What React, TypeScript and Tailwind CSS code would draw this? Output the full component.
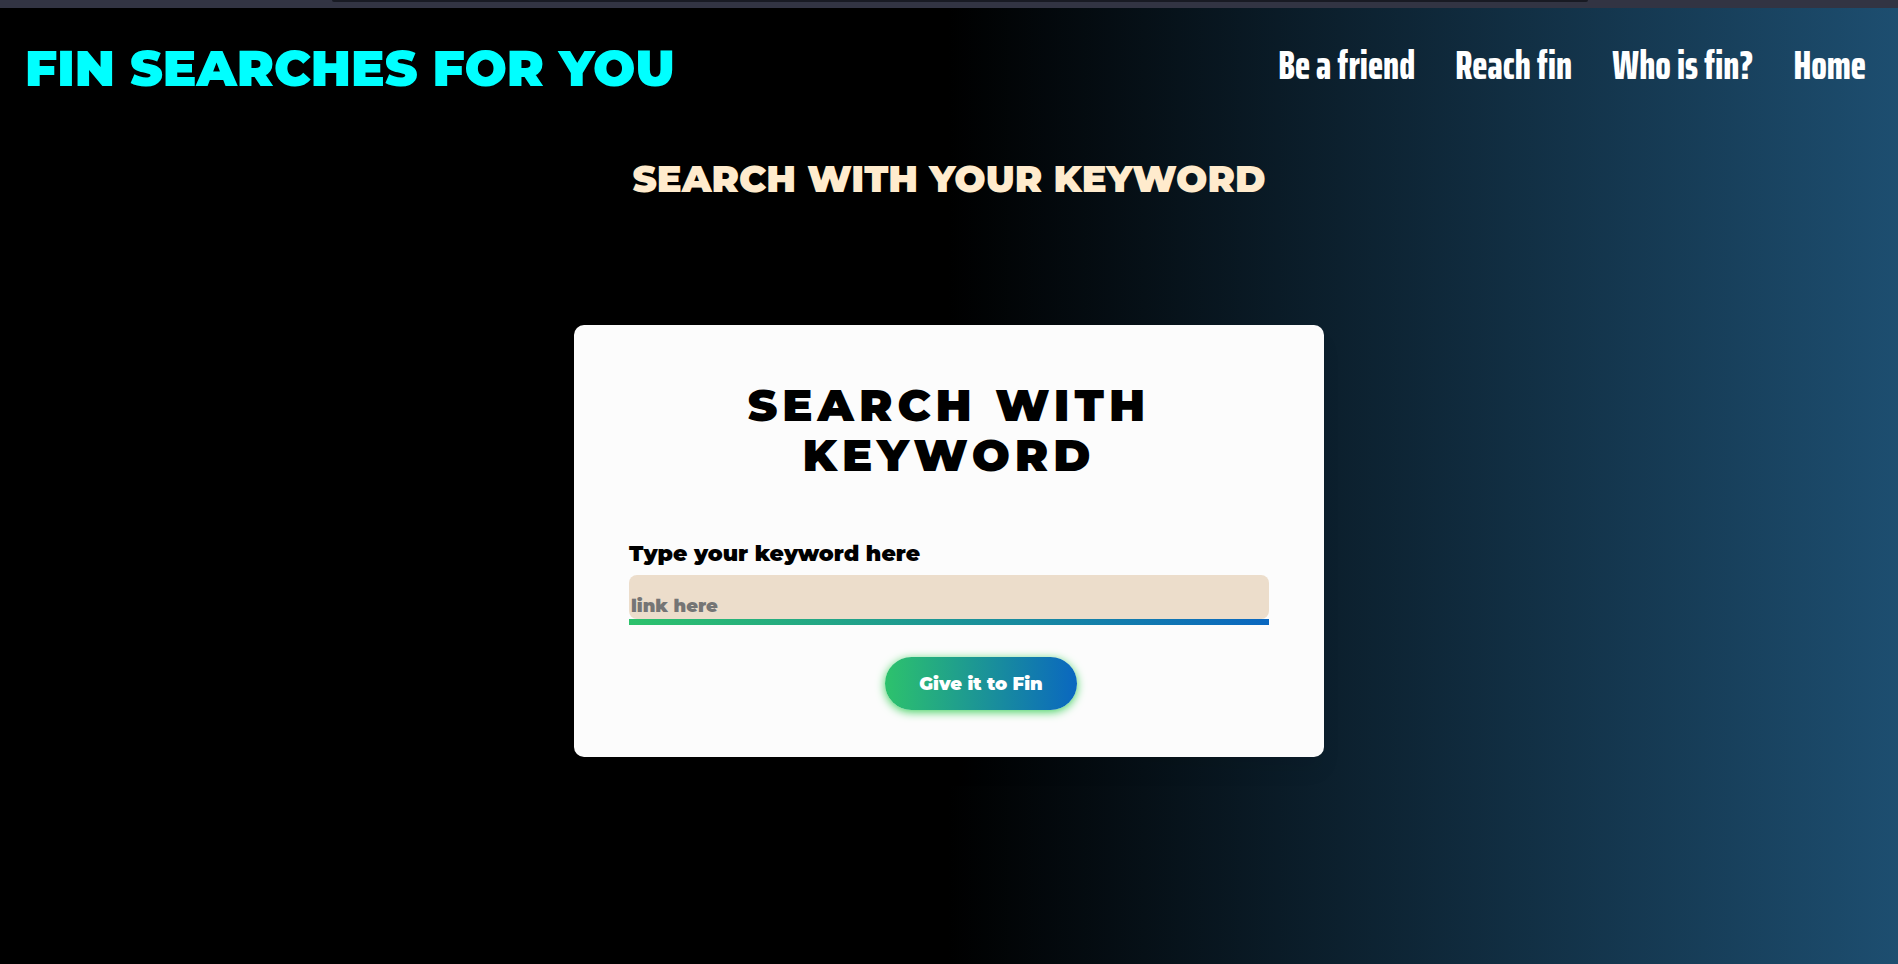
const links = ["Be a friend", "Reach fin", "Who is fin?", "Home"];

export default function App() {
  return (
    <div className="flex min-h-screen flex-col bg-linear-to-r/srgb from-black from-50% to-[#1d4e70] font-['Montserrat',Inter,sans-serif] font-black">
      <div className="h-2 bg-[#323443] px-[332px]">
        <div className="mr-[-22px] h-0.5 rounded-b bg-[#181a23]" />
      </div>

      <header className="flex items-start justify-between pt-8 pr-8 pl-[25px]">
        <h1 className="text-[50px] leading-[58px] text-[#00ffff]">FIN SEARCHES FOR YOU</h1>
        <nav className="flex gap-10 font-['Agency_FB','Saira_ExtraCondensed','Liberation_Sans_Narrow',Roboto,sans-serif] text-[41px] leading-[50px] font-extrabold text-white">
          {links.map((label) => (
            <a key={label} href="#">
              {label}
            </a>
          ))}
        </nav>
      </header>

      <main className="flex flex-col items-center">
        <h2 className="mt-[53px] text-[37px] leading-14 text-[#ffebcd]">SEARCH WITH YOUR KEYWORD</h2>

        <form
          className="mt-[118px] w-full max-w-[750px] rounded-[10px] bg-[#fcfcfc] px-[55px] pt-[55px] pb-[47px] shadow-[0_15px_20px_rgba(0,0,0,0.05)]"
          onSubmit={(event) => event.preventDefault()}
        >
          <h3 className="text-center text-[45px] leading-[50px] tracking-[5px] text-black">
            SEARCH WITH
            <br />
            KEYWORD
          </h3>
          <label htmlFor="keyword" className="mt-[58px] block text-[22px] leading-8 text-black">
            Type your keyword here
          </label>
          <input
            id="keyword"
            type="text"
            placeholder="link here"
            className="mt-[5px] block h-11 w-full rounded-lg bg-[#ecddcb] px-0.5 pt-[18px] text-lg leading-6 text-black outline-none placeholder:text-[#757575]"
          />
          <div className="h-1.5 bg-linear-to-r/srgb from-[#2dc26c] to-[#0a67c0]" />
          <button
            type="submit"
            className="mt-8 ml-64 block h-[53px] w-48 rounded-full bg-linear-to-r/srgb from-[#2dc26c] to-[#0a67c0] text-lg text-white shadow-[0_2px_10px_#42d15f]"
          >
            Give it to Fin
          </button>
        </form>
      </main>
    </div>
  );
}
